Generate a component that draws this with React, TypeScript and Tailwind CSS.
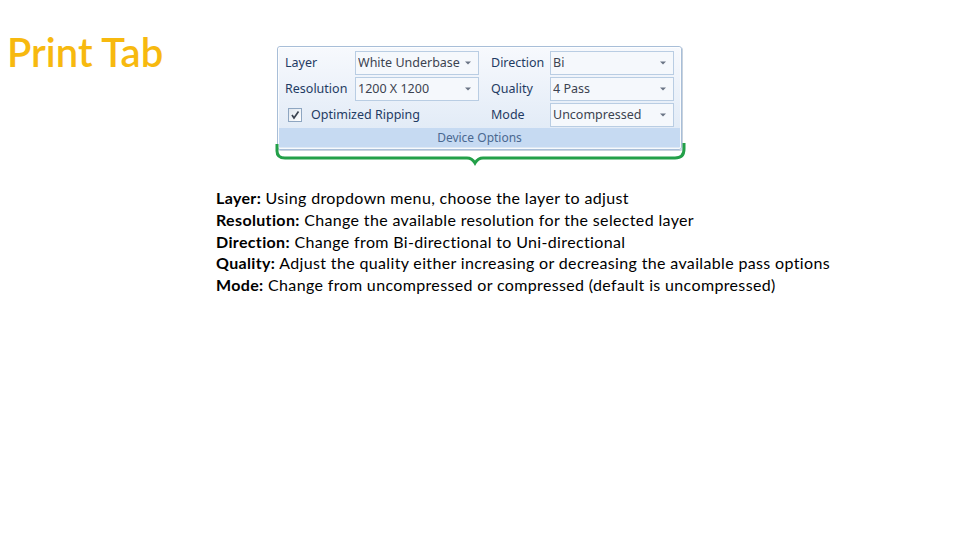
import React from "react";

const ribbonFont = { fontFamily: '"Noto Sans", "Open Sans", sans-serif' };

function Arrow() {
  return (
    <svg width="6" height="4" viewBox="0 0 6 4" className="shrink-0">
      <path d="M0 0.5 H6 L3 3.5 Z" fill="#6a7485" />
    </svg>
  );
}

function Combo({ value, width = "w-[124px]" }: { value: string; width?: string }) {
  return (
    <div
      className={`${width} h-[24px] flex items-center justify-between border border-[#b9cde3] bg-[#f5f8fc] pl-[2px] pr-[7px] gap-[4px]`}
    >
      <span className="text-[12.5px] text-[#3c4350] whitespace-nowrap overflow-hidden">{value}</span>
      <Arrow />
    </div>
  );
}

function Row({ label, value, labelWidth }: { label: string; value: string; labelWidth: string }) {
  return (
    <div className="flex items-center h-[24px]">
      <span className={`${labelWidth} text-[12.5px] text-[#1f3b63] whitespace-nowrap`}>{label}</span>
      <Combo value={value} />
    </div>
  );
}

function Checkbox() {
  return (
    <div className="w-[14px] h-[14px] border border-[#8ea6c1] bg-gradient-to-br from-[#dfe6ee] to-white flex items-center justify-center">
      <svg width="10" height="10" viewBox="0 0 10 10">
        <path d="M2 5 L4 8 L8.5 1.5" stroke="#3a4350" strokeWidth="1.7" fill="none" />
      </svg>
    </div>
  );
}

function Ribbon() {
  return (
    <div
      className="w-[405px] rounded-[3px] border border-[#a8bed8] bg-gradient-to-b from-[#f7f9fd] to-[#dde8f5] shadow-[1px_1px_0_#c9d3de]"
      style={ribbonFont}
    >
      <div className="rounded-[2px] border border-white/80">
        <div className="flex pt-[3px] pl-[6px] pr-[6px]">
          <div className="flex flex-col gap-[2px]">
            <Row label="Layer" value="White Underbase" labelWidth="w-[70px]" />
            <Row label="Resolution" value="1200 X 1200" labelWidth="w-[70px]" />
            <div className="flex items-center h-[24px] pl-[3px] gap-[9px]">
              <Checkbox />
              <span className="text-[12.5px] text-[#1f3b63]">Optimized Ripping</span>
            </div>
          </div>
          <div className="w-px h-[76px] bg-[#b8cbe0] ml-[3px] mr-[9px] shadow-[1px_0_0_#ffffff]" />
          <div className="flex flex-col gap-[2px]">
            <Row label="Direction" value="Bi" labelWidth="w-[59px]" />
            <Row label="Quality" value="4 Pass" labelWidth="w-[59px]" />
            <Row label="Mode" value="Uncompressed" labelWidth="w-[59px]" />
          </div>
        </div>
        <div className="mt-[1px] h-[19px] bg-[#c6daf2] flex items-center justify-center text-[12px] text-[#4a6890]">
          Device Options
        </div>
        <div className="h-[1px]" />
      </div>
    </div>
  );
}

function Brace() {
  return (
    <svg width="416" height="24" viewBox="0 0 416 24" className="-mt-[7px] -ml-[3px]">
      <path
        d="M3 1 V8 Q3 15 11 15 H193 Q198 15 201 20 Q204 15 209 15 H401 Q410 15 410 6 V0"
        stroke="#23a049"
        strokeWidth="3"
        fill="none"
      />
    </svg>
  );
}

export default function App() {
  return (
    <div className="w-[960px] h-[540px] bg-white overflow-hidden">
      <div className="flex items-start">
        <div
          className="w-[277px] pl-[7px] pt-[26px] text-[40px] leading-[52px] font-semibold text-[#f7b90f]"
          style={{ fontFamily: 'Lato, "Open Sans", sans-serif' }}
        >
          Print Tab
        </div>
        <div className="pt-[46px] flex flex-col">
          <Ribbon />
          <Brace />
        </div>
      </div>
      <div
        className="pl-[216px] mt-[20px] text-[16px] leading-[21.8px] tracking-[0.35px] text-black"
        style={{ fontFamily: 'Lato, "Open Sans", sans-serif' }}
      >
        <p><b>Layer:</b> Using dropdown menu, choose the layer to adjust</p>
        <p><b>Resolution:</b> Change the available resolution for the selected layer</p>
        <p><b>Direction:</b> Change from Bi-directional to Uni-directional</p>
        <p><b>Quality:</b> Adjust the quality either increasing or decreasing the available pass options</p>
        <p><b>Mode:</b> Change from uncompressed or compressed (default is uncompressed)</p>
      </div>
    </div>
  );
}
